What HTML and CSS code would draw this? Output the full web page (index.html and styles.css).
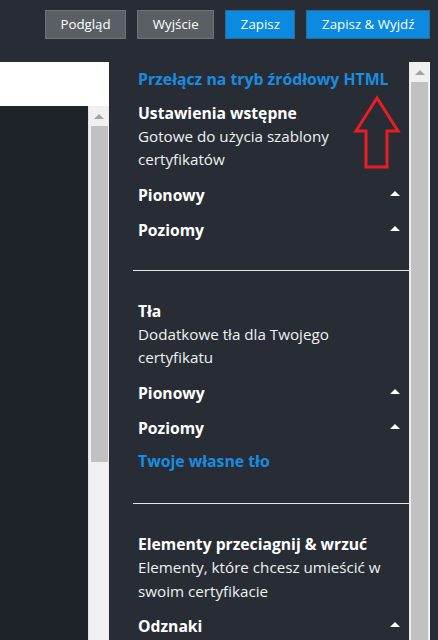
FILE: index.html
```html
<!DOCTYPE html>
<html lang="pl">
<head>
<meta charset="utf-8">
<title>Edytor certyfikatu</title>
<link rel="stylesheet" href="styles.css">
</head>
<body>
<div class="app">
  <header class="topbar">
    <button class="btn btn-gray">Podgląd</button>
    <button class="btn btn-gray">Wyjście</button>
    <button class="btn btn-blue">Zapisz</button>
    <button class="btn btn-blue">Zapisz &amp; Wyjdź</button>
  </header>
  <main class="main">
    <section class="preview">
      <div class="preview-top"></div>
      <div class="preview-body">
        <div class="preview-canvas"></div>
        <div class="scrollbar">
          <span class="scroll-up"></span>
          <span class="scroll-thumb thumb-left"></span>
        </div>
      </div>
    </section>
    <aside class="sidebar">
      <a class="link link-top">Przełącz na tryb źródłowy HTML</a>

      <h3 class="sec-title sec-first">Ustawienia wstępne</h3>
      <p class="sec-desc">Gotowe do użycia szablony certyfikatów</p>
      <div class="row">Pionowy<span class="caret"></span></div>
      <div class="row">Poziomy<span class="caret"></span></div>

      <hr class="sep sep-1">

      <h3 class="sec-title">Tła</h3>
      <p class="sec-desc">Dodatkowe tła dla Twojego certyfikatu</p>
      <div class="row">Pionowy<span class="caret"></span></div>
      <div class="row">Poziomy<span class="caret"></span></div>
      <a class="link link-own">Twoje własne tło</a>

      <hr class="sep sep-2">

      <h3 class="sec-title">Elementy przeciagnij &amp; wrzuć</h3>
      <p class="sec-desc desc-tall">Elementy, które chcesz umieścić w swoim certyfikacie</p>
      <div class="row">Odznaki<span class="caret"></span></div>

      <svg class="red-arrow" width="50" height="80" viewBox="0 0 50 80" aria-hidden="true">
        <polygon points="24,4 3,37 13,37 13,73 34,73 34,37 45,37" fill="none" stroke="#ec1c24" stroke-width="3" stroke-linejoin="miter"/>
      </svg>
    </aside>
    <div class="scrollbar scrollbar-right">
      <span class="scroll-up"></span>
      <span class="scroll-thumb thumb-right"></span>
    </div>
  </main>
</div>
</body>
</html>
```
FILE: styles.css
```css
* { box-sizing: border-box; }
html, body {
  margin: 0;
  padding: 0;
  height: 100%;
  background: #282d35;
  font-family: "Open Sans", "Liberation Sans", sans-serif;
  overflow: hidden;
}
.app {
  width: 438px;
  height: 640px;
  display: flex;
  flex-direction: column;
}
.topbar {
  height: 62px;
  flex: none;
  display: flex;
  justify-content: flex-end;
  align-items: flex-start;
  gap: 11px;
  padding: 10px 8px 0 0;
}
.btn {
  height: 29px;
  padding: 0 14.6px;
  font-family: "Open Sans", "Liberation Sans", sans-serif;
  font-size: 13.3px;
  line-height: 27px;
  color: #ffffff;
  border: 1px solid;
  border-radius: 0;
  cursor: pointer;
}
.btn-gray {
  background: #5a5f66;
  border-color: #6e7379;
}
.btn-blue {
  background: #0b8adf;
  border-color: #2c6a96;
}
.main {
  flex: 1;
  display: flex;
  min-height: 0;
}
.preview {
  width: 110px;
  flex: none;
  display: flex;
  flex-direction: column;
  border-right: 1px solid #23272e;
}
.preview-top {
  height: 44px;
  background: #ffffff;
  flex: none;
}
.preview-body {
  flex: 1;
  display: flex;
}
.preview-canvas {
  flex: 1;
  background: #1e232a;
}
.scrollbar {
  width: 21px;
  flex: none;
  background: #f0f0f0;
  border-left: 1px solid #e2e2e2;
  display: flex;
  flex-direction: column;
  align-items: center;
}
.scroll-up {
  width: 0;
  height: 0;
  margin-top: 8px;
  border-left: 5px solid transparent;
  border-right: 5px solid transparent;
  border-bottom: 5px solid #a3a3a3;
}
.scroll-thumb {
  width: 17px;
  background: #c1c1c1;
}
.thumb-left {
  margin-top: 7px;
  height: 336px;
}
.scrollbar-right {
  border-left: 1px solid #e8e8e8;
  border-right: 1px solid #f6f6f6;
  margin-right: 8px;
}
.thumb-right {
  margin-top: 7px;
  flex: 1;
}
.scrollbar-right .scroll-up { margin-top: 8px; }
.sidebar {
  flex: 1;
  position: relative;
  padding: 6px 9px 0 0;
  color: #ffffff;
  font-size: 15.2px;
  line-height: 23px;
}
.link, .sec-title, .sec-desc, .row {
  display: block;
  margin: 0;
  padding-left: 28px;
}
.link {
  color: #1a8ce0;
  font-weight: 700;
  font-size: 15.8px;
}
.sec-title {
  font-size: 15.7px;
  font-weight: 700;
  color: #ffffff;
  margin-top: 29px;
}
.sec-first { margin-top: 11px; }
.sec-desc {
  font-weight: 400;
  color: #eef0f2;
  margin-bottom: 7px;
}
.desc-tall { line-height: 23.5px; margin-bottom: 6px; }
.row {
  font-weight: 700;
  font-size: 15.7px;
  padding-top: 6px;
  padding-bottom: 6px;
  display: flex;
  justify-content: space-between;
  align-items: center;
}
.caret {
  width: 0;
  height: 0;
  margin-top: -4px;
  border-left: 5px solid transparent;
  border-right: 5px solid transparent;
  border-bottom: 5px solid #ffffff;
}
.link-own { margin-top: 4px; }
.sep {
  margin: 22px 0 0 23px;
  border: 0;
  border-top: 1px solid #e6e6e6;
  height: 0;
  width: auto;
  margin-right: -9px;
}
.sep-2 { margin-top: 30px; }
.red-arrow {
  position: absolute;
  left: 243px;
  top: 32px;
}
```
